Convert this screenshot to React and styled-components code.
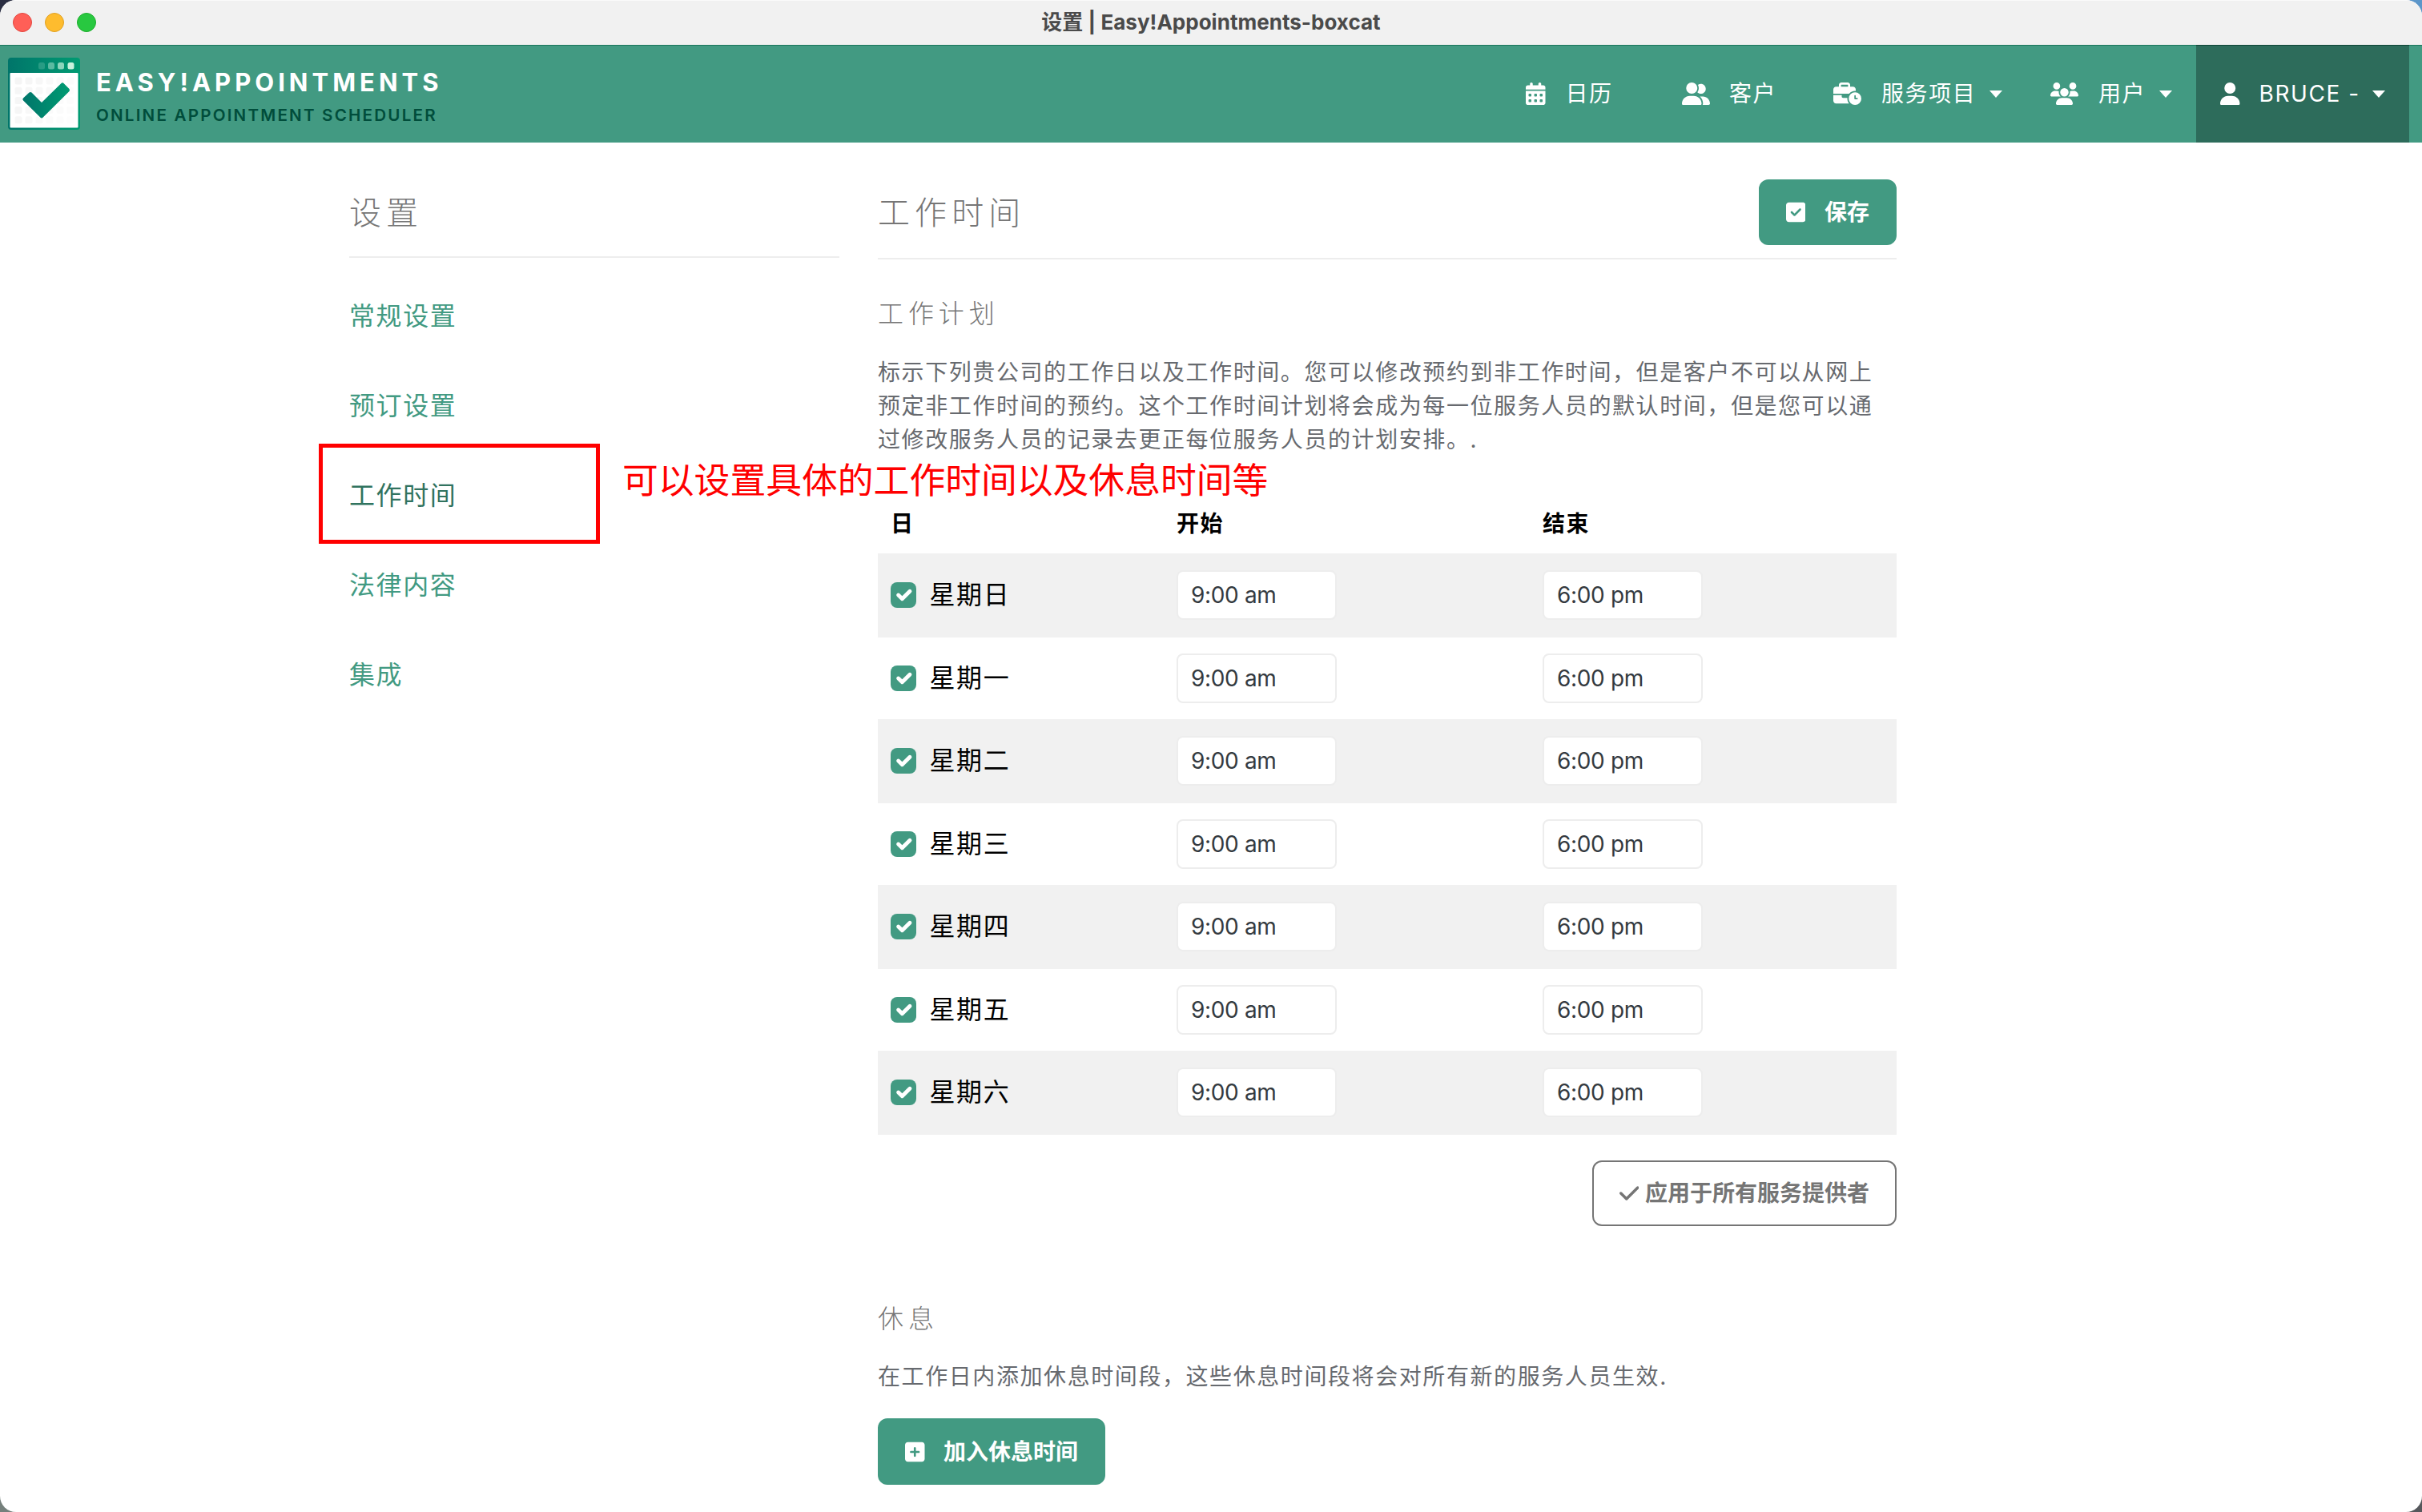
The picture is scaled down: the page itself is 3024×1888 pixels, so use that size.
import React from 'react';
import styled, { createGlobalStyle, css } from 'styled-components';
import {
  FaBusinessTime,
  FaCalendarDays,
  FaCheck,
  FaSquareCheck,
  FaSquarePlus,
  FaUser,
  FaUserGroup,
  FaUsers,
} from 'react-icons/fa6';

const green = '#429a82';
const darkGreen = '#2d6c5b';
const line = '#ededed';

const GlobalStyle = createGlobalStyle`
  * { box-sizing: border-box; }
  html, body { margin: 0; padding: 0; }
  body {
    width: 3024px;
    height: 1888px;
    overflow: hidden;
    background:
      linear-gradient(90deg, #2a2e42 50%, #5c96c9 50%) top / 100% 50% no-repeat,
      linear-gradient(90deg, #75807c 50%, #55585c 50%) bottom / 100% 50% no-repeat;
  }
  button, input { font-family: inherit; letter-spacing: inherit; margin: 0; }
`;

const Window = styled.div`
  width: 3024px;
  height: 1888px;
  overflow: hidden;
  border-radius: 20px;
  background: #fff;
  color: #000;
  font-family: Inter, 'Noto Sans CJK SC', sans-serif;
  font-size: 28px;
  letter-spacing: 1.58px;
`;

const TitleBar = styled.header`
  display: grid;
  grid-template-columns: 1fr auto 1fr;
  align-items: center;
  height: 56px;
  padding: 0 16px 1px 16px;
  border-top: 1px solid #fafafa;
  background: #f1f1f1;
`;

const Lights = styled.div`
  display: flex;
  gap: 16px;
`;

const Light = styled.span`
  width: 24px;
  height: 24px;
  border-radius: 50%;
  background: ${(p) => p.$fill};
  border: 1px solid ${(p) => p.$edge};
`;

const WindowTitle = styled.div`
  padding-bottom: 1px;
  font-size: 26px;
  font-weight: 700;
  line-height: 40px;
  letter-spacing: 0.02px;
  color: #4a4a4a;
`;

const NavBar = styled.nav`
  display: flex;
  align-items: stretch;
  height: 122px;
  padding: 0 16px 0 10px;
  background: ${green};
  box-shadow: inset 0 1px 0 #1b765c;
`;

const Brand = styled.a`
  display: flex;
  align-items: center;
  gap: 20px;
  margin-right: auto;
  svg { display: block; }
`;

const BrandText = styled.div`
  padding-top: 9px;
`;

const BrandName = styled.div`
  font-size: 31px;
  font-weight: 700;
  line-height: 44px;
  letter-spacing: 5px;
  color: #fff;
`;

const BrandSub = styled.div`
  font-size: 20.6px;
  font-weight: 600;
  line-height: 38px;
  letter-spacing: 2.2px;
  color: #004d3b;
`;

const NavLink = styled.a`
  display: flex;
  align-items: center;
  width: ${(p) => p.$width}px;
  padding-left: 30px;
  color: #fff;
  line-height: 42px;
  white-space: nowrap;
  ${(p) =>
    p.$active &&
    css`
      background: ${darkGreen};
      box-shadow: inset 0 1px 0 #0f4536;
    `}
`;

const NavIcon = styled.span`
  display: flex;
  margin-right: ${(p) => p.$gap}px;
  svg { display: block; width: ${(p) => p.$width}px; height: 28px; }
`;

const Caret = styled.span`
  margin-left: ${(p) => p.$gap}px;
  border: 8px solid transparent;
  border-top: 9px solid #fff;
  border-bottom: 0;
`;

const Content = styled.div`
  display: flex;
  gap: 48px;
  padding-left: 436px;
`;

const Sidebar = styled.aside`
  width: 612px;
`;

const Main = styled.main`
  width: 1272px;
`;

const PanelHead = styled.div`
  display: flex;
  justify-content: space-between;
  height: ${(p) => p.$height}px;
  padding-top: 46px;
  border-bottom: 2px solid ${line};
`;

const Heading = styled.h4`
  margin: 0;
  font-size: 40px;
  font-weight: 300;
  line-height: 83px;
  letter-spacing: 6.1px;
  color: #767676;
`;

const SubHeading = styled.h5`
  margin: 0;
  font-size: 32px;
  font-weight: 300;
  line-height: 40px;
  letter-spacing: 5.9px;
  color: #767676;
`;

const Menu = styled.div`
  padding-top: 17px;
`;

const MenuItem = styled.a`
  display: block;
  position: relative;
  height: 112px;
  font-size: 32px;
  line-height: 112px;
  color: ${(p) => (p.$active ? '#31735f' : green)};
`;

const Marker = styled.span`
  position: absolute;
  left: -38px;
  top: -9px;
  width: 351px;
  height: 125px;
  border: 5px solid #ff0000;
`;

const MarkerNote = styled.span`
  position: absolute;
  left: 341px;
  top: 4px;
  z-index: 2;
  font-size: 44.8px;
  line-height: 66px;
  letter-spacing: 0;
  white-space: nowrap;
  color: #ff0000;
`;

const Button = styled.button`
  display: flex;
  align-items: center;
  gap: ${(p) => (p.$outline ? 7.5 : 23.5)}px;
  height: ${(p) => p.$height || 82}px;
  padding: 0 32px;
  border: 2px solid ${(p) => (p.$outline ? '#757575' : green)};
  border-radius: 12px;
  background: ${(p) => (p.$outline ? 'transparent' : green)};
  color: ${(p) => (p.$outline ? '#757575' : '#fff')};
  font-size: 28px;
  font-weight: 700;
  line-height: 42px;
  letter-spacing: 0;
  white-space: nowrap;
  svg { display: block; width: 24.5px; height: 28px; }
`;

const Section = styled.section`
  padding-top: ${(p) => p.$top}px;
`;

const Paragraph = styled.p`
  margin: ${(p) => p.$margin};
  line-height: 42px;
  color: #676a6f;
`;

const Row = styled.div`
  display: grid;
  grid-template-columns: 357px 457px 1fr;
  align-items: center;
  padding: 0 0 ${(p) => (p.$striped ? 1 : 0)}px 16px;
  height: ${(p) => (p.$striped ? 105 : 102)}px;
  background: ${(p) => (p.$striped ? '#f1f1f1' : 'transparent')};
`;

const HeadRow = styled(Row)`
  height: 74px;
  font-weight: 700;
  line-height: 42px;
`;

const Day = styled.label`
  display: flex;
  align-items: center;
  gap: 16.5px;
  font-size: 32px;
  line-height: 48px;
`;

const CheckBox = styled.span`
  display: block;
  width: 32px;
  height: 32px;
  border-radius: 8px;
  background: ${green};
  svg { display: block; }
`;

const TimeInput = styled.input`
  width: 200px;
  height: 62px;
  padding: 0 16px;
  border: 2px solid ${line};
  border-radius: 8px;
  background: #fff;
  color: #343a40;
  font-size: 28px;
  letter-spacing: -0.35px;
  outline: none;
`;

const Actions = styled.div`
  display: flex;
  justify-content: ${(p) => (p.$end ? 'flex-end' : 'flex-start')};
  padding-top: ${(p) => p.$top}px;
`;

function Logo() {
  const cells = [];
  for (let r = 0; r < 5; r += 1) {
    for (let c = 0; c < 6; c += 1) {
      cells.push(
        <rect
          key={`${r}-${c}`}
          x={8.5 + c * 13}
          y={24.5 + r * 12.2}
          width="9"
          height="9"
          rx="2.5"
          fill="#f5f5f5"
          opacity={1 - c * 0.12 - r * 0.05}
        />
      );
    }
  }
  return (
    <svg width="90" height="90" viewBox="0 0 90 90">
      <defs>
        <linearGradient id="logoGreen" x1="0" y1="0" x2="1" y2="0">
          <stop offset="0" stopColor="#00756a" />
          <stop offset="1" stopColor="#009b72" />
        </linearGradient>
      </defs>
      <rect width="90" height="90" rx="4" fill="url(#logoGreen)" />
      <rect x="2.5" y="19" width="85" height="68.5" rx="1" fill="#fff" />
      <rect x="38" y="6" width="8" height="8.5" rx="2.5" fill="#c8f2dd" opacity="0.2" />
      <rect x="50" y="6" width="8" height="8.5" rx="2.5" fill="#c8f2dd" opacity="0.45" />
      <rect x="62" y="6" width="8" height="8.5" rx="2.5" fill="#c8f2dd" opacity="0.7" />
      <rect x="74.5" y="6" width="8" height="8.5" rx="2.5" fill="#c8f2dd" />
      {cells}
      <path
        d="M19 50.5 26.5 43.5Q28 42.5 29.5 43.5L42 56 66.5 32Q68 30.5 69.500 32L76.500 39Q77.500 40.500 76.500 42L43.500 74.800Q42 76 40.500 74.800L19 53.500Q17.500 52 19 50.500Z"
        fill="url(#logoGreen)"
      />
    </svg>
  );
}

const days = ['星期日', '星期一', '星期二', '星期三', '星期四', '星期五', '星期六'];
const menu = ['常规设置', '预订设置', '工作时间', '法律内容', '集成'];

export default function App() {
  return (
    <>
      <GlobalStyle />
      <Window>
        <TitleBar>
          <Lights>
            <Light $fill="#ff5f57" $edge="#e2463f" />
            <Light $fill="#febc2e" $edge="#dfa023" />
            <Light $fill="#28c840" $edge="#1dad2c" />
          </Lights>
          <WindowTitle>设置 | Easy!Appointments-boxcat</WindowTitle>
        </TitleBar>
        <NavBar>
          <Brand>
            <Logo />
            <BrandText>
              <BrandName>EASY!APPOINTMENTS</BrandName>
              <BrandSub>ONLINE APPOINTMENT SCHEDULER</BrandSub>
            </BrandText>
          </Brand>
          <NavLink $width={195}>
            <NavIcon $width={24.5} $gap={25}><FaCalendarDays /></NavIcon>
            日历
          </NavLink>
          <NavLink $width={189}>
            <NavIcon $width={35} $gap={24}><FaUserGroup /></NavIcon>
            客户
          </NavLink>
          <NavLink $width={271}>
            <NavIcon $width={35} $gap={25}><FaBusinessTime /></NavIcon>
            服务项目
            <Caret $gap={17} />
          </NavLink>
          <NavLink $width={212}>
            <NavIcon $width={35} $gap={25}><FaUsers /></NavIcon>
            用户
            <Caret $gap={17} />
          </NavLink>
          <NavLink $width={266} $active>
            <NavIcon $width={24.5} $gap={24}><FaUser /></NavIcon>
            BRUCE -
            <Caret $gap={15.5} />
          </NavLink>
        </NavBar>
        <Content>
          <Sidebar>
            <PanelHead $height={144}>
              <Heading>设置</Heading>
            </PanelHead>
            <Menu>
              {menu.map((label, i) => (
                <MenuItem key={label} $active={i === 2}>
                  {label}
                  {i === 2 && (
                    <>
                      <Marker />
                      <MarkerNote>可以设置具体的工作时间以及休息时间等</MarkerNote>
                    </>
                  )}
                </MenuItem>
              ))}
            </Menu>
          </Sidebar>
          <Main>
            <PanelHead $height={146}>
              <Heading>工作时间</Heading>
              <Button>
                <FaSquareCheck />
                保存
              </Button>
            </PanelHead>
            <Section $top={48}>
              <SubHeading>工作计划</SubHeading>
              <Paragraph $margin="32px 0 47px">
                标示下列贵公司的工作日以及工作时间。您可以修改预约到非工作时间，但是客户不可以从网上
                <br />
                预定非工作时间的预约。这个工作时间计划将会成为每一位服务人员的默认时间，但是您可以通
                <br />
                过修改服务人员的记录去更正每位服务人员的计划安排。.
              </Paragraph>
              <HeadRow>
                <span>日</span>
                <span>开始</span>
                <span>结束</span>
              </HeadRow>
              {days.map((day, i) => (
                <Row key={day} $striped={i % 2 === 0}>
                  <Day>
                    <CheckBox>
                      <svg width="32" height="32" viewBox="0 0 20 20">
                        <path
                          d="M6 10l3 3l6-6"
                          fill="none"
                          stroke="#fff"
                          strokeWidth="3"
                          strokeLinecap="round"
                          strokeLinejoin="round"
                        />
                      </svg>
                    </CheckBox>
                    {day}
                  </Day>
                  <TimeInput defaultValue="9:00 am" />
                  <TimeInput defaultValue="6:00 pm" />
                </Row>
              ))}
              <Actions $end $top={32}>
                <Button $outline>
                  <FaCheck />
                  应用于所有服务提供者
                </Button>
              </Actions>
            </Section>
            <Section $top={96}>
              <SubHeading>休息</SubHeading>
              <Paragraph $margin="31px 0 0">
                在工作日内添加休息时间段，这些休息时间段将会对所有新的服务人员生效.
              </Paragraph>
              <Actions $top={31}>
                <Button $height={83}>
                  <FaSquarePlus />
                  加入休息时间
                </Button>
              </Actions>
            </Section>
          </Main>
        </Content>
      </Window>
    </>
  );
}
